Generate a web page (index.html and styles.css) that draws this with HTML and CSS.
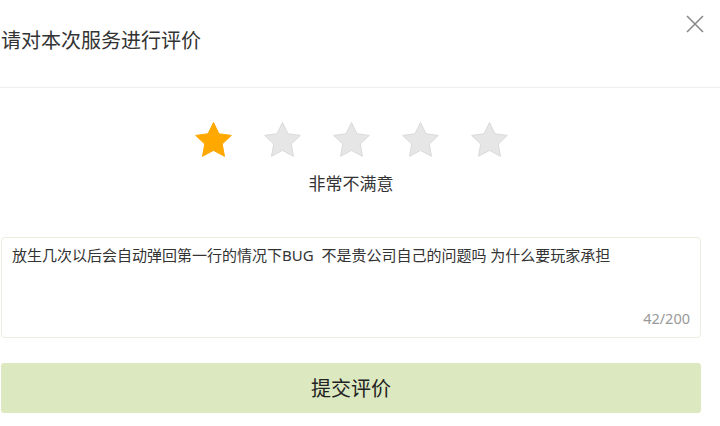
FILE: index.html
```html
<!DOCTYPE html>
<html lang="zh-CN">
<head>
<meta charset="utf-8">
<link rel="stylesheet" href="styles.css">
</head>
<body>
<div class="page">
  <div class="header">
    <div class="title">请对本次服务进行评价</div>
    <svg class="close" viewBox="0 0 18 18" width="18" height="18"><path d="M1 1L17 17M17 1L1 17" stroke="#8a8a8a" stroke-width="1.6" fill="none"/></svg>
  </div>
  <div class="content">
    <div class="stars">
      <svg class="star on" viewBox="0 0 40 38"><path d="M20 1.5l5.6 11.6 12.7 1.7-9.3 8.9 2.3 12.6L20 30.2 8.7 36.3 11 23.7 1.7 14.8l12.7-1.7z"/></svg>
      <svg class="star" viewBox="0 0 40 38"><path d="M20 1.5l5.6 11.6 12.7 1.7-9.3 8.9 2.3 12.6L20 30.2 8.7 36.3 11 23.7 1.7 14.8l12.7-1.7z"/></svg>
      <svg class="star" viewBox="0 0 40 38"><path d="M20 1.5l5.6 11.6 12.7 1.7-9.3 8.9 2.3 12.6L20 30.2 8.7 36.3 11 23.7 1.7 14.8l12.7-1.7z"/></svg>
      <svg class="star" viewBox="0 0 40 38"><path d="M20 1.5l5.6 11.6 12.7 1.7-9.3 8.9 2.3 12.6L20 30.2 8.7 36.3 11 23.7 1.7 14.8l12.7-1.7z"/></svg>
      <svg class="star" viewBox="0 0 40 38"><path d="M20 1.5l5.6 11.6 12.7 1.7-9.3 8.9 2.3 12.6L20 30.2 8.7 36.3 11 23.7 1.7 14.8l12.7-1.7z"/></svg>
    </div>
    <div class="label">非常不满意</div>
    <div class="box">
      <div class="text">放生几次以后会自动弹回第一行的情况下BUG  不是贵公司自己的问题吗 为什么要玩家承担</div>
      <div class="count">42/200</div>
    </div>
    <div class="submit">提交评价</div>
  </div>
</div>
</body>
</html>
```
FILE: styles.css
```css
html, body {
  margin: 0;
  padding: 0;
  background: #fff;
}
body {
  font-family: "Noto Sans CJK SC", "Noto Sans", sans-serif;
  color: #333;
}
.page {
  width: 720px;
}
.header {
  height: 88px;
  border-bottom: 1px solid #eeeeee;
  display: flex;
  justify-content: space-between;
  align-items: flex-start;
  box-sizing: border-box;
}
.title {
  margin-top: 26px;
  margin-left: 1px;
  font-size: 20px;
  line-height: 28px;
  color: #333;
}
.close {
  margin-top: 15px;
  margin-right: 16px;
}
.content {
  width: 700px;
  margin-left: 1px;
  display: flex;
  flex-direction: column;
}
.stars {
  margin-top: 33px;
  display: flex;
  justify-content: center;
  gap: 30px;
  height: 37px;
}
.star {
  width: 39px;
  height: 37px;
}
.star path {
  fill: #e6e6e6;
  stroke: #d9d9d9;
  stroke-width: 1;
  stroke-linejoin: round;
}
.star.on path {
  fill: #ffa800;
  stroke: #ffa800;
}
.label {
  margin-top: 13px;
  text-align: center;
  font-size: 17px;
  line-height: 24px;
  color: #333;
}
.box {
  margin-top: 42px;
  height: 101px;
  box-sizing: border-box;
  border: 1px solid #ecedde;
  border-radius: 4px;
  padding: 6px 10px 10px 10px;
  display: flex;
  flex-direction: column;
  justify-content: space-between;
}
.text {
  font-family: "Noto Sans", "Noto Sans CJK SC", sans-serif;
  font-size: 15px;
  line-height: 22px;
  color: #333;
  white-space: pre-wrap;
}
.count {
  font-family: "Noto Sans", "Noto Sans CJK SC", sans-serif;
  text-align: right;
  font-size: 14.5px;
  line-height: 18px;
  color: #999;
}
.submit {
  margin-top: 25px;
  height: 50px;
  border-radius: 3px;
  background: #dce8bf;
  color: #222;
  font-size: 20px;
  line-height: 50px;
  text-align: center;
}
```
